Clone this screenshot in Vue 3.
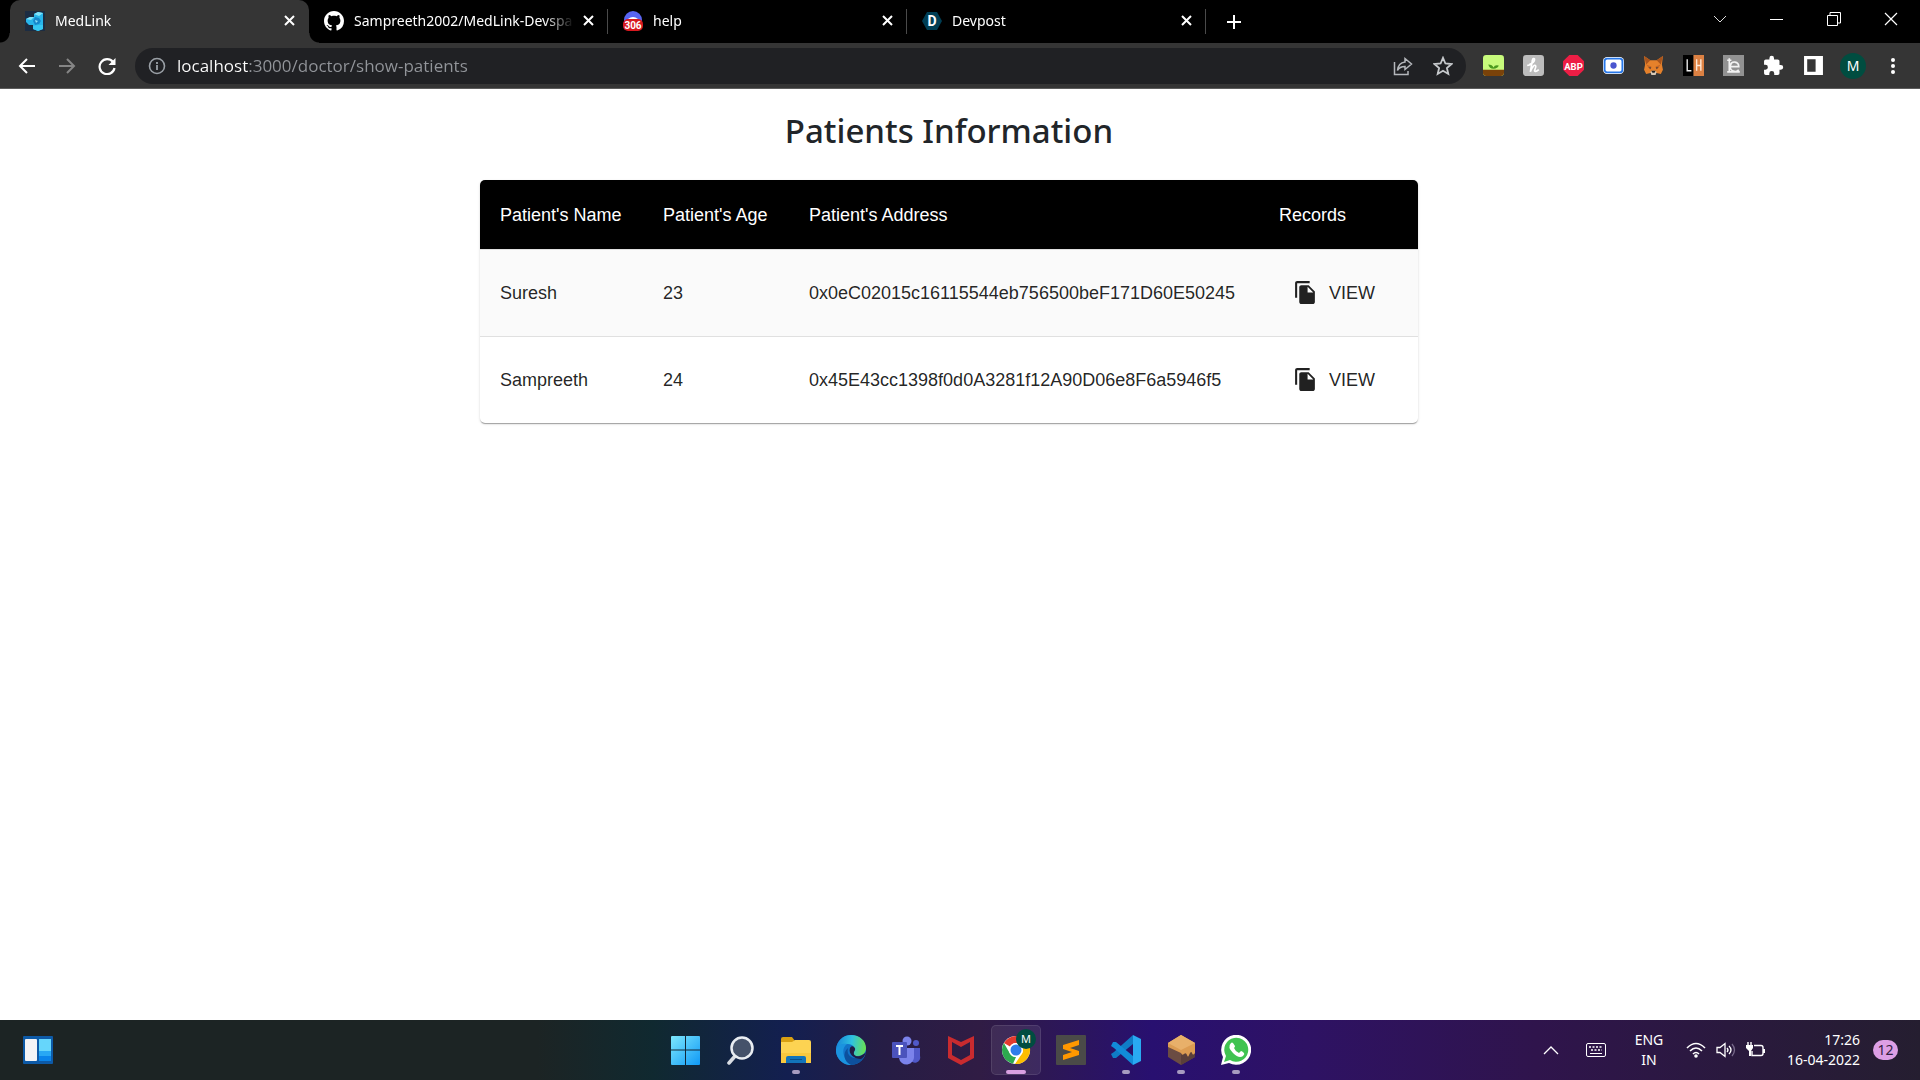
<script setup>
import { ref } from "vue";

const tabs = [
  { id: "medlink", title: "MedLink" },
  { id: "github", title: "Sampreeth2002/MedLink-Devspa" },
  { id: "help", title: "help" },
  { id: "devpost", title: "Devpost" }
];
const activeTab = ref("medlink");
const url = ref("localhost:3000/doctor/show-patients");

const extensions = ["forest", "honey", "abp", "recorder", "metamask", "lh", "reader", "puzzle", "panel"];

const patients = [
  { name: "Suresh", age: 23, address: "0x0eC02015c16115544eb756500beF171D60E50245" },
  { name: "Sampreeth", age: 24, address: "0x45E43cc1398f0d0A3281f12A90D06e8F6a5946f5" }
];

const apps = [
  { id: "start", label: "Start" },
  { id: "search", label: "Search" },
  { id: "files", label: "File Explorer", open: true },
  { id: "edge", label: "Edge" },
  { id: "teams", label: "Teams" },
  { id: "mcafee", label: "McAfee" },
  { id: "chrome", label: "Chrome", active: true },
  { id: "sublime", label: "Sublime Text" },
  { id: "vscode", label: "Visual Studio Code", open: true },
  { id: "ganache", label: "Ganache", open: true },
  { id: "whatsapp", label: "WhatsApp", open: true }
];
</script>

<template>
  <div class="screen">
    <header class="browser">
      <div class="tab-strip">
        <div v-for="t in tabs" :key="t.id" class="tab" :class="{ active: t.id === activeTab }">
          <button class="tab-main" @click="activeTab = t.id">
            <svg v-if="t.id === 'medlink'" class="favicon" viewBox="0 0 20 20">
              <rect width="20" height="20" fill="#1c2c42" />
              <path d="M9 3l4-2 5 1v16l-5 2-5-2v-4l-4 0-3-3V8l4-2 4 0z" fill="#28b5ea" />
              <path d="M9 3l4-2 5 1-4 3zM1 8l4-2 4 0-3 3z" fill="#7fe3fb" />
              <path d="M10 6l4 1 2 3-2 3-4 1-2-4z" fill="#1687cb" />
              <path d="M10 9l3 1-2 2z" fill="#8be4fb" />
              <path d="M8 15l5-1 5 0v4l-5 2-5-2z" fill="#35c8f3" />
            </svg>
            <svg v-else-if="t.id === 'github'" class="favicon" viewBox="0 0 16 16">
              <path
                fill="#fff"
                d="M8 0C3.58 0 0 3.58 0 8c0 3.54 2.29 6.53 5.47 7.59.4.07.55-.17.55-.38 0-.19-.01-.82-.01-1.49-2.01.37-2.53-.49-2.69-.94-.09-.23-.48-.94-.82-1.13-.28-.15-.68-.52-.01-.53.63-.01 1.08.58 1.23.82.72 1.21 1.87.87 2.33.66.07-.52.28-.87.51-1.07-1.78-.2-3.64-.89-3.64-3.95 0-.87.31-1.59.82-2.15-.08-.2-.36-1.02.08-2.12 0 0 .67-.21 2.2.82.64-.18 1.32-.27 2-.27s1.36.09 2 .27c1.53-1.04 2.2-.82 2.2-.82.44 1.1.16 1.92.08 2.12.51.56.82 1.27.82 2.15 0 3.07-1.87 3.75-3.65 3.95.29.25.54.73.54 1.48 0 1.07-.01 1.93-.01 2.2 0 .21.15.46.55.38A8.01 8.01 0 0016 8c0-4.42-3.58-8-8-8z"
              />
            </svg>
            <svg v-else-if="t.id === 'help'" class="favicon" viewBox="0 0 20 20">
              <circle cx="10" cy="9" r="9" fill="#5865f2" />
              <path d="M5 8q5-4 10 0z" fill="#fff" />
              <rect x="0" y="8" width="20" height="12" rx="5" fill="#d8191f" />
              <text x="10" y="18" text-anchor="middle" class="fav-count">306</text>
            </svg>
            <svg v-else class="favicon" viewBox="0 0 20 20">
              <path d="M5 1h10l5 9-5 9H5L0 10z" fill="#003e54" />
              <text x="10" y="15" text-anchor="middle" class="fav-letter">D</text>
            </svg>
            <span class="tab-title">{{ t.title }}</span>
          </button>
          <button class="tab-close" :aria-label="`Close ${t.title}`">
            <svg width="11" height="11" viewBox="0 0 11 11">
              <path d="M1 1l9 9M10 1L1 10" stroke="#fff" stroke-width="2" />
            </svg>
          </button>
        </div>
        <button class="new-tab" aria-label="New tab">
          <svg width="16" height="16" viewBox="0 0 16 16">
            <path d="M8 1v14M1 8h14" stroke="#fff" stroke-width="2" />
          </svg>
        </button>
        <div class="window-controls">
          <button aria-label="Search tabs">
            <svg width="14" height="14" viewBox="0 0 14 14">
              <path d="M1 4l6 6 6-6" fill="none" stroke="#ddd" />
            </svg>
          </button>
          <button aria-label="Minimize">
            <svg width="14" height="14" viewBox="0 0 14 14"><path d="M0 7.500h13" stroke="#fff" /></svg>
          </button>
          <button aria-label="Restore">
            <svg width="14" height="14" viewBox="0 0 14 14">
              <path d="M.5 3.500h10v10H.5zM3 3V.5h10.500v10.500H11" fill="none" stroke="#fff" />
            </svg>
          </button>
          <button aria-label="Close window">
            <svg width="14" height="14" viewBox="0 0 14 14">
              <path d="M1 1l12 12M13 1L1 13" stroke="#fff" stroke-width="1.200" />
            </svg>
          </button>
        </div>
      </div>

      <div class="toolbar">
        <div class="nav">
          <button aria-label="Back">
            <svg width="18" height="18" viewBox="0 0 18 18">
              <path d="M17 9H2M9 2L2 9l7 7" fill="none" stroke="#fff" stroke-width="2" />
            </svg>
          </button>
          <button aria-label="Forward">
            <svg width="18" height="18" viewBox="0 0 18 18">
              <path d="M1 9h15M9 2l7 7-7 7" fill="none" stroke="#858585" stroke-width="2" />
            </svg>
          </button>
          <button aria-label="Reload">
            <svg width="18" height="18" viewBox="0 0 18 18">
              <path d="M15 5A7.500 7.500 0 1 0 16.500 11" fill="none" stroke="#fff" stroke-width="2.200" />
              <path d="M17.500 1v7h-7z" fill="#fff" />
            </svg>
          </button>
        </div>
        <div class="address">
          <svg width="18" height="18" viewBox="0 0 18 18">
            <circle cx="9" cy="9" r="7.500" fill="none" stroke="#9aa0a6" stroke-width="1.600" />
            <path d="M9 8v5M9 5v2" stroke="#9aa0a6" stroke-width="1.800" />
          </svg>
          <input v-model="url" class="url" type="text" aria-label="Address" spellcheck="false" />
          <button aria-label="Share">
            <svg width="20" height="20" viewBox="0 0 20 20" fill="none" stroke="#b4b7bb" stroke-width="1.500">
              <path d="M1.500 6v12.500H15V15" />
              <path d="M12 2.500l6.500 5.500-6.500 5.500v-3c-3.500 0-6 1-7.500 4 .5-5 3-8 7.500-8.500z" />
            </svg>
          </button>
          <button aria-label="Bookmark">
            <svg width="20" height="20" viewBox="0 0 20 20">
              <path
                d="M10 1.800l2.400 5.700 6.100.5-4.600 4 1.400 6L10 14.800 4.700 18l1.400-6-4.600-4 6.100-.5z"
                fill="none"
                stroke="#c6c9cc"
                stroke-width="1.800"
              />
            </svg>
          </button>
        </div>
        <div class="extensions">
          <button v-for="e in extensions" :key="e" :aria-label="e">
            <svg width="21" height="21" viewBox="0 0 20 20">
              <template v-if="e === 'forest'">
                <rect width="20" height="20" rx="3" fill="#c8fb7c" />
                <path d="M0 14h20v3a3 3 0 0 1-3 3H3a3 3 0 0 1-3-3z" fill="#7a4209" />
                <path d="M10 13Q6 13 5 9q4 0 5 3 1-3 5-2-1 3-5 3z" fill="#4b9a1f" />
              </template>
              <template v-else-if="e === 'honey'">
                <rect width="20" height="20" rx="3" fill="#bcbcbc" />
                <path
                  d="M6 9c3-1 5-3 5-5 0-1-2-1-2 1L7 16c2-5 4-7 5-6s-1 4-1 5 2 1 4-1M4 10l4-1"
                  fill="none"
                  stroke="#fff"
                  stroke-width="1.600"
                />
              </template>
              <template v-else-if="e === 'abp'">
                <path d="M6 0h8l6 6v8l-6 6H6l-6-6V6z" fill="#ed1e45" />
                <text x="10" y="14" text-anchor="middle" class="ext-abp">ABP</text>
              </template>
              <template v-else-if="e === 'recorder'">
                <rect x="0" y="2" width="20" height="16" rx="4" fill="#fff" />
                <rect x="1.500" y="3.500" width="17" height="13" rx="2.500" fill="#fff" stroke="#2777e8" stroke-width="1.800" />
                <circle cx="10" cy="10" r="3" fill="#4a55cf" />
              </template>
              <template v-else-if="e === 'metamask'">
                <path d="M1 1l6 4h6l6-4-1 8 1 5-2 4-5-1-2 2-2-2-5 1-2-4 1-5z" fill="#e5812b" />
                <path d="M1 1l6 4-4 4zM19 1l-6 4 4 4z" fill="#a9541c" />
                <path d="M3 9l5 2-1 3zM17 9l-5 2 1 3z" fill="#c86622" />
                <path d="M5 12l3 0-1 1zM15 12l-3 0 1 1z" fill="#283040" />
                <path d="M7 16l1 3h4l1-3-2-1H9z" fill="#d8c9b6" />
                <path d="M8 15h4l-1 2H9z" fill="#222" />
              </template>
              <template v-else-if="e === 'lh'">
                <rect width="10" height="20" fill="#000" />
                <rect x="10" width="10" height="20" fill="#dc8143" />
                <path d="M4 4v11h4" fill="none" stroke="#eee" stroke-width="1.300" />
                <path d="M13 4v11M17 4v11M13 10h4" stroke="#ffe9d8" stroke-width="1.300" />
              </template>
              <template v-else-if="e === 'reader'">
                <rect width="20" height="20" fill="#929292" />
                <path
                  d="M6 3v13M4 16h12M7 11h8c0-5-7-6-8-1-1 6 6 7 8 4M4 5h4"
                  fill="none"
                  stroke="#f2f2f2"
                  stroke-width="1.600"
                />
              </template>
              <path
                v-else-if="e === 'puzzle'"
                fill="#fff"
                d="M17 9.500h-1.300V6a1.700 1.700 0 0 0-1.700-1.700h-3.500V3a2.200 2.200 0 0 0-4.400 0v1.300H2.700A1.700 1.700 0 0 0 1 6v3.300h1.300a2.300 2.300 0 0 1 0 4.700H1v3.300A1.700 1.700 0 0 0 2.700 19H6v-1.300a2.300 2.300 0 0 1 4.700 0V19H14a1.700 1.700 0 0 0 1.700-1.700V14H17a2.200 2.200 0 0 0 0-4.500z"
              />
              <path v-else fill="#fff" fill-rule="evenodd" d="M1 1h18v18H1zM4 4v12h8V4z" />
            </svg>
          </button>
          <button class="profile" aria-label="Profile"><span class="avatar">M</span></button>
          <button aria-label="Menu">
            <svg width="20" height="20" viewBox="0 0 20 20" fill="#fff">
              <circle cx="10" cy="4" r="2" />
              <circle cx="10" cy="10" r="2" />
              <circle cx="10" cy="16" r="2" />
            </svg>
          </button>
        </div>
      </div>
    </header>

    <main class="page">
      <h1>Patients Information</h1>
      <div class="paper">
        <table>
          <colgroup>
            <col class="col-name" />
            <col class="col-age" />
            <col />
            <col class="col-records" />
          </colgroup>
          <thead>
            <tr>
              <th scope="col">Patient's Name</th>
              <th scope="col">Patient's Age</th>
              <th scope="col">Patient's Address</th>
              <th scope="col">Records</th>
            </tr>
          </thead>
          <tbody>
            <tr v-for="p in patients" :key="p.address">
              <td>{{ p.name }}</td>
              <td>{{ p.age }}</td>
              <td>{{ p.address }}</td>
              <td>
                <button class="view">
                  <svg width="25" height="25" viewBox="0 0 24 24" fill="currentColor">
                    <path
                      d="M16 1H4c-1.100 0-2 .9-2 2v14h2V3h12V1zm-1 4l6 6v10c0 1.100-.9 2-2 2H7.990C6.890 23 6 22.100 6 21l.01-14c0-1.100.89-2 1.990-2h7zm-1 7h5.500L14 6.500V12z"
                    />
                  </svg>
                  VIEW
                </button>
              </td>
            </tr>
          </tbody>
        </table>
      </div>
    </main>

    <footer class="taskbar">
      <button class="widgets" aria-label="Widgets">
        <svg width="30" height="28" viewBox="0 0 30 28">
          <rect width="30" height="28" rx="1" fill="#0d5aa7" />
          <rect x="2" y="3" width="12" height="22" rx="1" fill="#f3f4f6" />
          <rect x="16" y="3" width="12" height="12" fill="#66d6fb" />
          <rect x="16" y="15" width="12" height="5" fill="#28a8f4" />
          <rect x="16" y="20" width="12" height="5" fill="#0a84ea" />
        </svg>
      </button>

      <nav class="apps">
        <button v-for="a in apps" :key="a.id" class="app" :class="{ active: a.active, open: a.open }" :aria-label="a.label">
          <svg width="30" height="30" viewBox="0 0 30 30">
            <template v-if="a.id === 'start'">
              <defs>
                <linearGradient id="win" x1="0" y1="0" x2="30" y2="30" gradientUnits="userSpaceOnUse">
                  <stop offset="0" stop-color="#7fe9fd" />
                  <stop offset="1" stop-color="#0d97f5" />
                </linearGradient>
              </defs>
              <path d="M0 2q0-1 1-1h13v13.500H0zM15 1H28q1 0 1 1v12.500H15zM0 15.500h14V30H1q-1 0-1-1zM15 15.500H29V29q0 1-1 1H15z" fill="url(#win)" />
            </template>
            <template v-else-if="a.id === 'search'">
              <path d="M10 20l-7 8" stroke="#d9dde3" stroke-width="3.500" stroke-linecap="round" />
              <circle cx="16" cy="13" r="10.500" fill="#45526a" stroke="#e9edf2" stroke-width="2.500" />
            </template>
            <template v-else-if="a.id === 'files'">
              <path d="M0 4q0-2 2-2h9l3 4v6H0z" fill="#d9a012" />
              <path d="M0 7h11l3-2h14q2 0 2 2v21H0z" fill="#fdd352" />
              <path d="M0 18h30v10H0z" fill="#f6be2a" opacity=".5" />
              <path d="M5 23q0-2 2-2h16q2 0 2 2v5H5z" fill="#1274bb" />
              <path d="M9 24.500h12" stroke="#0b4f8a" />
            </template>
            <template v-else-if="a.id === 'edge'">
              <defs>
                <linearGradient id="edgeTop" x1="0" y1="10" x2="30" y2="14" gradientUnits="userSpaceOnUse">
                  <stop offset="0" stop-color="#1787da" />
                  <stop offset=".5" stop-color="#2fc1e0" />
                  <stop offset="1" stop-color="#6be24c" />
                </linearGradient>
              </defs>
              <circle cx="15" cy="15" r="15" fill="#1173c9" />
              <path d="M0 14C1 6 7 0 15 0c9 0 15 6 15 13 0 5-4 8-8 8-5 0-5-2-4-4 2-4-1-8-6-8-6 0-11 2-12 5z" fill="url(#edgeTop)" />
              <path d="M0 14c1-3 6-6 11-5-6 4-5 15 5 21C6 31-1 22 0 14z" fill="#1b93df" />
              <path d="M12 13c-2 7 4 13 16 9-3 5-8 8-13 8-7-3-9-12-3-17z" fill="#0d509d" />
              <path d="M18 12c2 2 1 3 0 5-1 3 2 5 6 4 3-1 5-3 6-4-1 4-3 6-5 7-7 0-13-5-11-11 1-2 3-2 4-1z" fill="#201c44" />
            </template>
            <template v-else-if="a.id === 'teams'">
              <circle cx="16" cy="6" r="4.500" fill="#7b83eb" />
              <circle cx="25" cy="8" r="3" fill="#5059c9" />
              <path d="M19 13h10v8a5 5 0 0 1-10 3z" fill="#5059c9" />
              <path d="M8 13h15v8a7 7 0 0 1-15 2z" fill="#7b83eb" />
              <rect x="1" y="7" width="15" height="16" rx="1" fill="#4b53bc" />
              <path d="M5 11h7M8.500 11v9" stroke="#fff" stroke-width="2" />
            </template>
            <path v-else-if="a.id === 'mcafee'" fill="#c92b2f" fill-rule="evenodd" d="M2 1l13 6 13-6v22l-13 7-13-7zM6 7v13l9 5 9-5V7l-9 5z" />
            <template v-else-if="a.id === 'chrome'">
              <circle cx="15" cy="15" r="14" fill="#fff" />
              <path d="M2.900 8A14 14 0 0 1 27.100 8H15a7 7 0 0 0-6 3.500z" fill="#e33b2e" />
              <path d="M2.900 8l6 10.500A7 7 0 0 0 15 22l-3 6.700A14 14 0 0 1 2.900 8z" fill="#2da94f" />
              <path d="M27.100 8H15a7 7 0 0 1 6 10.500L14 29A14 14 0 0 0 27.100 8z" fill="#fdbd00" />
              <circle cx="15" cy="15" r="7" fill="#fff" />
              <circle cx="15" cy="15" r="5.500" fill="#2f7de9" />
            </template>
            <template v-else-if="a.id === 'sublime'">
              <rect width="30" height="30" rx="1" fill="#4a4a48" />
              <path d="M7 10l16-5v5l-9 3 9 3v4L7 25v-5l9-3-9-3z" fill="#ff9800" />
            </template>
            <template v-else-if="a.id === 'vscode'">
              <path d="M22 0L3 17l-3 2 2 4h3L22 9z" fill="#0f7cc6" />
              <path d="M22 30L3 13l-3-2 2-4h3l17 14z" fill="#118bd8" />
              <path d="M22 0l8 4v22l-8 4z" fill="#29aaf2" />
            </template>
            <template v-else-if="a.id === 'ganache'">
              <path d="M2 8l13-8 14 8v14l-14 8-13-8z" fill="#6b4c43" />
              <path d="M15 14l14-6v14l-14 8z" fill="#5a3f3a" />
              <path d="M2 8l13-8 14 8v10q-2 3-3 0t-3 2q-1 3-2 0t-3-1-3-1L2 12z" fill="#dc9c52" />
              <path d="M2 8l13-8 14 8-14 7z" fill="#e8b06a" />
            </template>
            <template v-else>
              <path d="M0 30l2-8A15 15 0 1 1 8 28z" fill="#fff" />
              <path d="M3 27l2-6A12 12 0 1 1 9 25z" fill="#40c351" />
              <path d="M10 8q1-1 2 0l2 3q0 1-1 2 1 3 5 5l2-2q1 0 3 2 1 1-1 3-4 3-10-3-6-6-2-10z" fill="#fff" />
            </template>
          </svg>
          <span v-if="a.active" class="app-badge">M</span>
        </button>
      </nav>

      <div class="tray">
        <button class="tray-up" aria-label="Show hidden icons">
          <svg width="16" height="10" viewBox="0 0 16 10">
            <path d="M1 9l7-7 7 7" fill="none" stroke="#fff" stroke-width="1.300" />
          </svg>
        </button>
        <button class="tray-keyboard" aria-label="Touch keyboard">
          <svg width="20" height="14" viewBox="0 0 20 14">
            <rect x=".5" y=".5" width="19" height="13" rx="1.500" fill="none" stroke="#fff" />
            <path d="M3 4h14M5 7h11" stroke="#fff" stroke-width="1.500" stroke-dasharray="2 1.500" />
            <path d="M4 10.500h12" stroke="#fff" />
          </svg>
        </button>
        <button class="language">ENG<br />IN</button>
        <button class="status" aria-label="Network, volume and battery">
          <svg width="20" height="16" viewBox="0 0 20 16" fill="none" stroke="#fff" stroke-width="1.600">
            <path d="M1 6q9-9 18 0M4 9q6-6 12 0M7 12q3-3 6 0" />
            <circle cx="10" cy="14" r="1" fill="#fff" />
          </svg>
          <svg width="20" height="16" viewBox="0 0 20 16" fill="none" stroke="#fff" stroke-width="1.300">
            <path d="M1 5.500h3l5-4v13l-5-4H1zM11 6q2 2 0 4M13 4q4 4 0 8" />
            <path d="M16 2q5 6 0 12" stroke="#77698a" />
          </svg>
          <svg width="20" height="16" viewBox="0 0 20 16" fill="none" stroke="#fff" stroke-width="1.400">
            <path d="M8 3.500h7q2 0 2 2v6q0 2-2 2H6V9" />
            <path d="M18 7v4" stroke-width="2" />
            <path d="M0 3h7v3L5 9v5H3V9L0 6z" fill="#fff" stroke="none" />
            <path d="M2 0v3M5 0v3" />
          </svg>
        </button>
        <button class="clock">17:26<br />16-04-2022</button>
        <button class="notify">12</button>
      </div>
    </footer>
  </div>
</template>

<style>
body {
  margin: 0;
  background: #fff;
}
</style>

<style scoped>
.screen {
  display: flex;
  flex-direction: column;
  min-height: 100vh;
  font-family: "Noto Sans", "Open Sans", sans-serif;
}
button {
  display: flex;
  align-items: center;
  justify-content: center;
  padding: 0;
  border: 0;
  background: none;
  color: inherit;
  font: inherit;
  cursor: pointer;
}
svg {
  flex: none;
}

/* tab strip */
.tab-strip {
  display: flex;
  align-items: stretch;
  height: 43px;
  padding-left: 10px;
  background: #000;
  color: #fff;
}
.tab {
  position: relative;
  display: flex;
  align-items: center;
  flex: 0 1 299px;
  min-width: 0;
  box-sizing: border-box;
  padding: 0 14px 2px 15px;
}
.tab:not(.active)::after {
  content: "";
  position: absolute;
  right: 0;
  top: 9px;
  height: 25px;
  border-right: 1px solid #4a4a4a;
}
.tab.active {
  background: #353535;
  border-radius: 10px 10px 0 0;
}
.tab.active::before,
.tab.active::after {
  content: "";
  position: absolute;
  bottom: 0;
  width: 10px;
  height: 10px;
}
.tab.active::before {
  left: -10px;
  background: radial-gradient(circle at 0 0, #000 9px, #353535 10px);
}
.tab.active::after {
  right: -10px;
  background: radial-gradient(circle at 100% 0, #000 9px, #353535 10px);
}
.tab-main {
  flex: 1;
  gap: 10px;
  min-width: 0;
  height: 100%;
  justify-content: flex-start;
}
.favicon {
  width: 20px;
  height: 20px;
}
.fav-count {
  font: bold 10px Roboto, sans-serif;
  fill: #fff;
}
.fav-letter {
  font: bold 14px Roboto, sans-serif;
  fill: #fff;
}
.tab-title {
  flex: 1;
  overflow: hidden;
  white-space: nowrap;
  text-align: left;
  font-size: 14px;
  mask-image: linear-gradient(to right, #000 190px, transparent 220px);
}
.tab-close {
  width: 11px;
  height: 20px;
  margin-left: 8px;
}
.new-tab {
  width: 55px;
}
.window-controls {
  display: flex;
  height: 38px;
  margin-left: auto;
  padding-right: 1px;
}
.window-controls button {
  width: 57px;
}

/* toolbar */
.toolbar {
  display: flex;
  align-items: center;
  height: 45px;
  border-bottom: 1px solid #5c5c5c;
  background: #353535;
}
.nav {
  display: flex;
  padding: 0 8px 0 7px;
}
.nav button {
  width: 40px;
  height: 36px;
}
.address {
  display: flex;
  align-items: center;
  flex: 1;
  height: 36px;
  padding: 0 3px 0 13px;
  border-radius: 18px;
  background: #202124;
}
.address button {
  width: 40px;
  height: 36px;
}
.url {
  flex: 1;
  min-width: 0;
  margin-left: 11px;
  padding: 0;
  border: 0;
  outline: 0;
  font-family: "Open Sans", sans-serif;
  font-size: 17px;
  color: transparent;
  caret-color: #fff;
  background: linear-gradient(to right, #fff 72px, #92959a 72px);
  background-clip: text;
}
.extensions {
  display: flex;
  padding: 0 7px;
}
.extensions button {
  width: 40px;
  height: 36px;
}
.ext-abp {
  font: bold 9px Roboto, sans-serif;
  fill: #fff;
}
.avatar {
  width: 26px;
  border-radius: 50%;
  background: #004d40;
  color: #fff;
  font-size: 14px;
  line-height: 26px;
}

/* page */
.page {
  flex: 1;
  padding: 20px 22px 20px 0;
}
h1 {
  margin: 0 0 28px;
  color: #212529;
  font-size: 33px;
  font-weight: 500;
  line-height: 43px;
  text-align: center;
}
.paper {
  max-width: 938px;
  margin: 0 auto;
  border-radius: 5px;
  overflow: hidden;
  box-shadow: 0 2px 1px -1px rgba(0, 0, 0, 0.2), 0 1px 1px rgba(0, 0, 0, 0.14), 0 1px 3px rgba(0, 0, 0, 0.12);
}
table {
  width: 100%;
  border-collapse: separate;
  border-spacing: 0;
  table-layout: fixed;
  font-family: "Liberation Sans", Arial, sans-serif;
  font-size: 18px;
  line-height: 30px;
}
.col-name {
  width: 163px;
}
.col-age {
  width: 146px;
}
.col-records {
  width: 159px;
}
th,
td {
  padding: 20px;
  border-bottom: 1px solid #e0e0e0;
  text-align: left;
  white-space: nowrap;
}
th {
  padding: 20px 20px 19px;
  background: #000;
  color: #fff;
  font-weight: 400;
}
td {
  padding: 20px 20px 21px;
  color: rgba(0, 0, 0, 0.87);
}
tbody tr:nth-child(odd) {
  background: #fafafa;
}
tbody tr:last-child td {
  border-bottom: 0;
}
.view {
  gap: 11px;
  height: 45px;
  padding: 0 14px;
}

/* taskbar */
.taskbar {
  display: grid;
  grid-template-columns: 1fr auto 1fr;
  align-items: center;
  height: 60px;
  background: linear-gradient(
    to right,
    #1c2424 0%,
    #1c2424 28%,
    #102930 34%,
    #131f50 41%,
    #261d45 46%,
    #301c44 51%,
    #281070 60%,
    #2e1264 68%,
    #2f144c 80%,
    #251e30 100%
  );
  color: #fff;
}
.widgets {
  width: 60px;
  height: 50px;
  margin-left: 8px;
}
.apps {
  display: flex;
  gap: 5px;
  padding-left: 2px;
}
.app {
  position: relative;
  width: 50px;
  height: 50px;
  box-sizing: border-box;
  border-radius: 5px;
}
.app.active {
  border: 1px solid rgba(255, 255, 255, 0.1);
  background: rgba(255, 255, 255, 0.08);
}
.app.open::after,
.app.active::after {
  content: "";
  position: absolute;
  bottom: 1px;
  width: 8px;
  height: 4px;
  border-radius: 2px;
  background: #a79bc0;
}
.app.active::after {
  bottom: 0;
  width: 20px;
  background: #d9a0e2;
}
.app-badge {
  position: absolute;
  top: 3px;
  right: 4px;
  width: 20px;
  border-radius: 50%;
  background: #004d40;
  font-size: 11px;
  line-height: 20px;
}
.tray {
  display: flex;
  align-items: center;
  justify-content: flex-end;
  padding-right: 22px;
  font-size: 14px;
  line-height: 20px;
}
.tray-up {
  width: 40px;
  height: 40px;
}
.tray-keyboard {
  width: 50px;
  height: 40px;
}
.language {
  width: 30px;
  margin: 0 22px 0 13px;
}
.status {
  gap: 10px;
}
.clock {
  justify-content: flex-end;
  width: 94px;
  text-align: right;
}
.notify {
  width: 25px;
  height: 20px;
  margin-left: 13px;
  border-radius: 10px;
  background: #dd9fe5;
  color: #33203f;
}
</style>
